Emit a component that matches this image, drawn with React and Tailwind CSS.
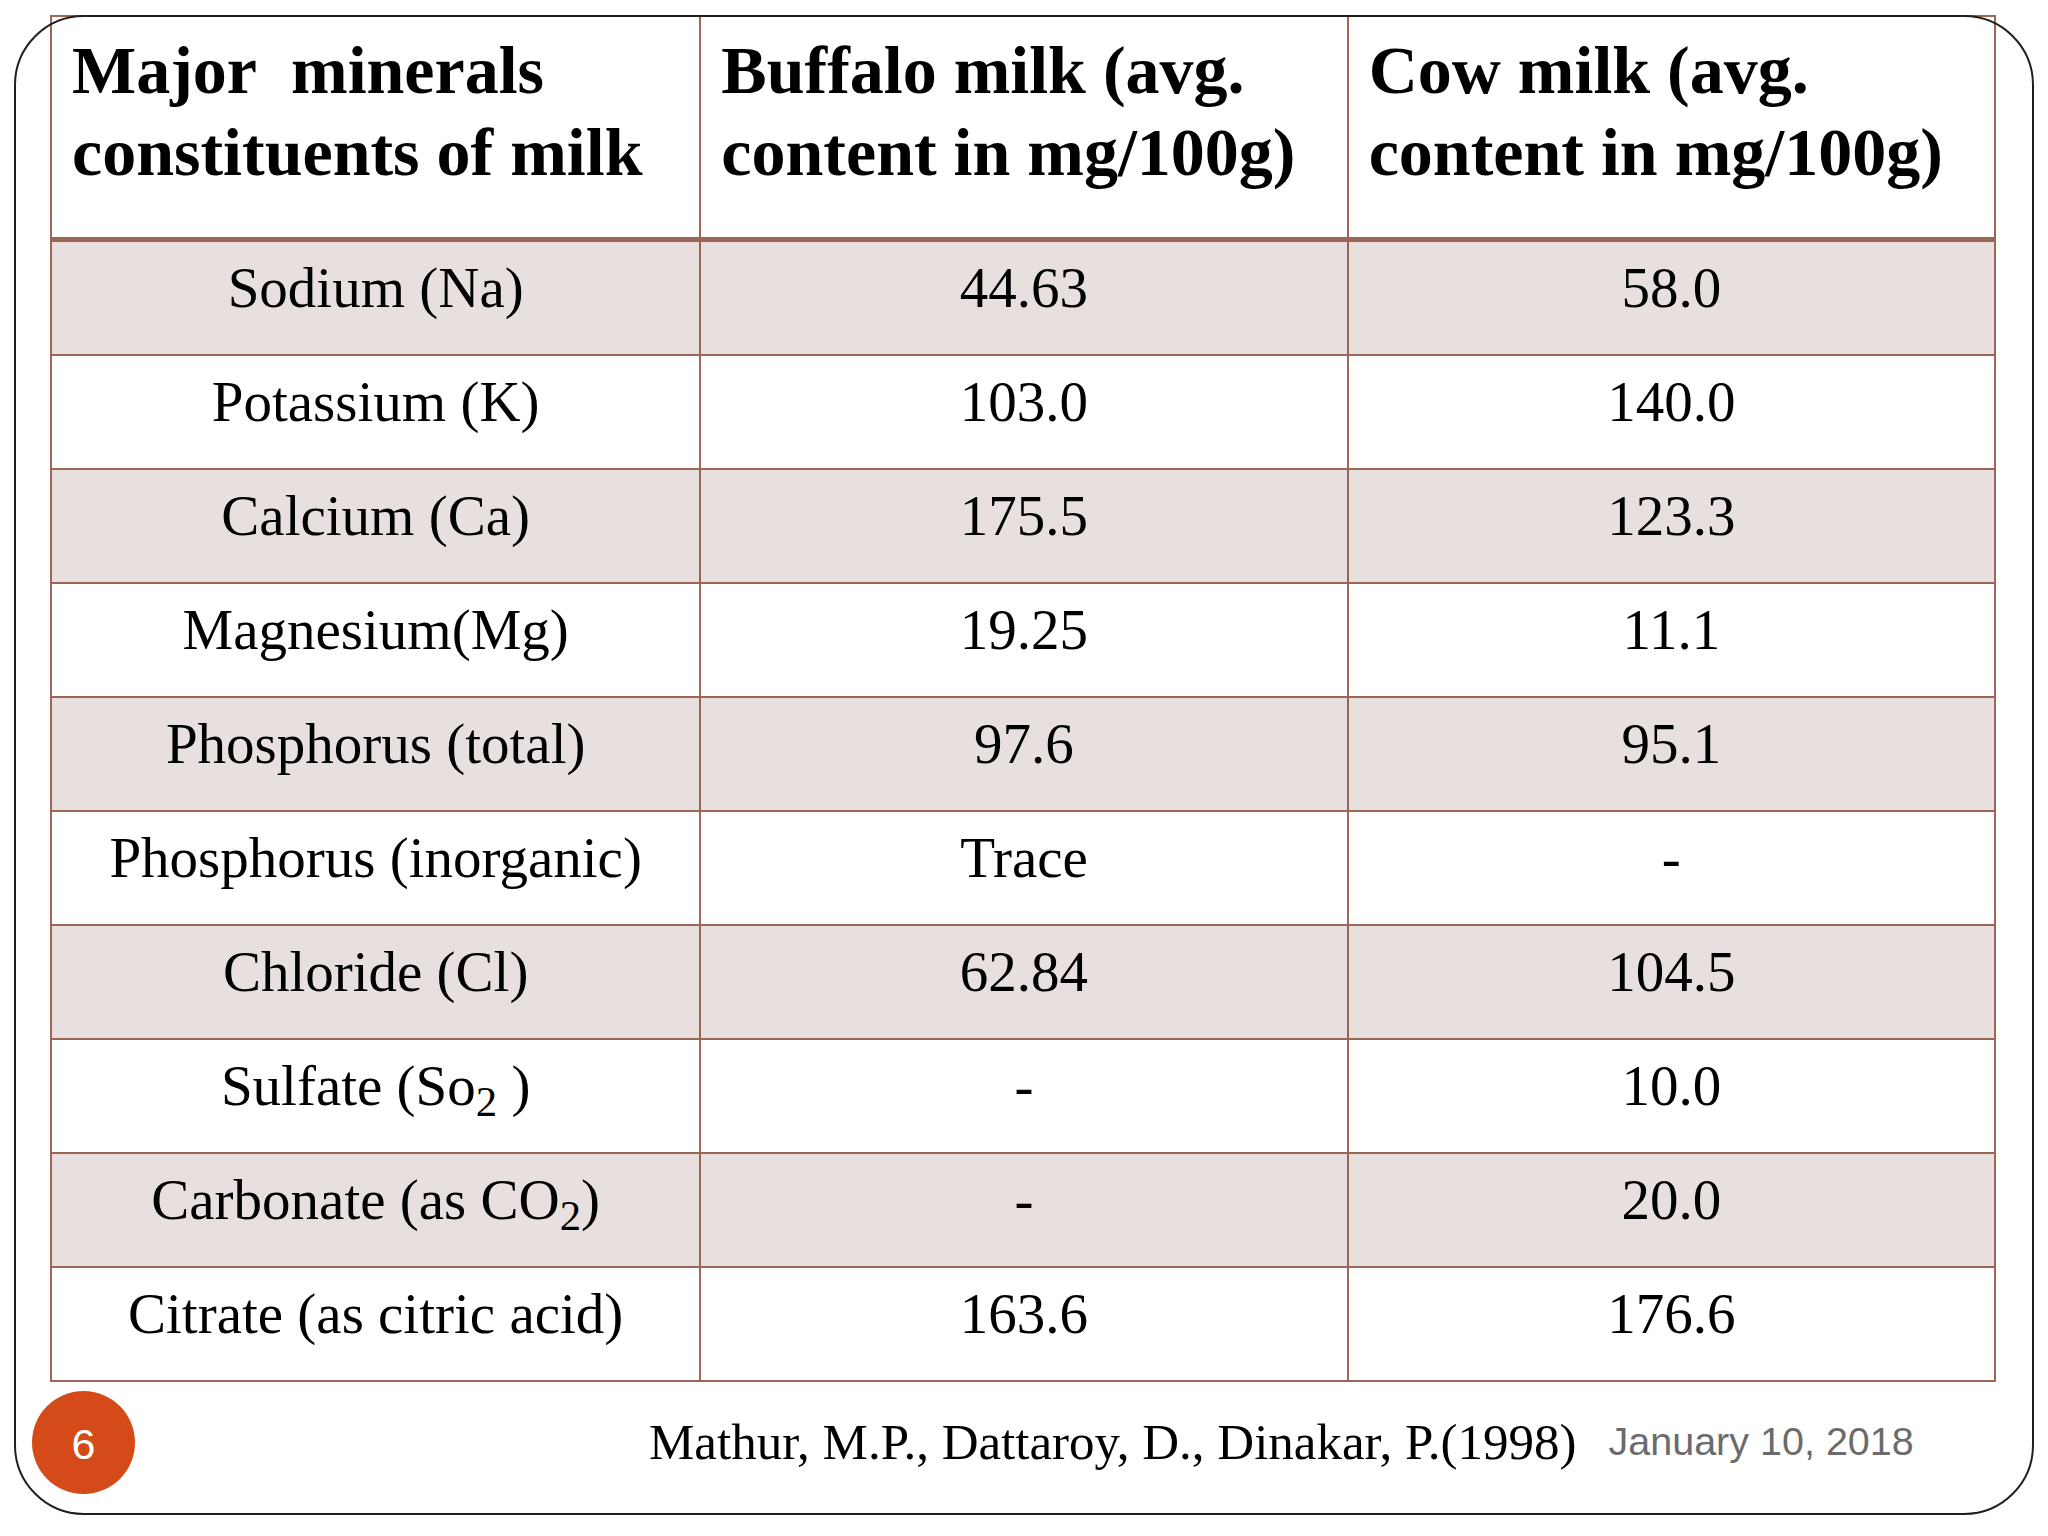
import React from 'react';

const rows = [
	{ name: 'Sodium (Na)', buffalo: '44.63', cow: '58.0' },
	{ name: 'Potassium (K)', buffalo: '103.0', cow: '140.0' },
	{ name: 'Calcium (Ca)', buffalo: '175.5', cow: '123.3' },
	{ name: 'Magnesium(Mg)', buffalo: '19.25', cow: '11.1' },
	{ name: 'Phosphorus (total)', buffalo: '97.6', cow: '95.1' },
	{ name: 'Phosphorus (inorganic)', buffalo: 'Trace', cow: '-' },
	{ name: 'Chloride (Cl)', buffalo: '62.84', cow: '104.5' },
	{
		name: (
			<>
				Sulfate (So<sub>2</sub> )
			</>
		),
		buffalo: '-',
		cow: '10.0',
	},
	{
		name: (
			<>
				Carbonate (as CO<sub>2</sub>)
			</>
		),
		buffalo: '-',
		cow: '20.0',
	},
	{ name: 'Citrate (as citric acid)', buffalo: '163.6', cow: '176.6' },
];

const Row = ({ row, shaded, last }) => {
	const bg = shaded ? 'bg-[#e8e0de]' : 'bg-white';
	const h = last ? 'h-[112px]' : 'h-[114px] border-b-2 border-[#9c6757]';
	return (
		<div className={`grid grid-cols-3 ${h} ${bg}`}>
			<div className="pt-[14px] text-center leading-[64px]">{row.name}</div>
			<div className="pt-[14px] text-center leading-[64px] border-l-2 border-[#9c6757]">
				{row.buffalo}
			</div>
			<div className="pt-[14px] text-center leading-[64px] border-l-2 border-[#9c6757]">
				{row.cow}
			</div>
		</div>
	);
};

const App = () => {
	return (
		<div className="relative w-[2048px] h-[1536px] bg-white overflow-hidden font-['Liberation_Serif',serif] text-black">
			<div className="pl-[50px] pt-[15px]">
				<div className="w-[1946px] border-2 border-[#9c6757] text-[57px]">
					{/* header */}
					<div className="grid grid-cols-3 h-[225px] border-b-[5px] border-[#9c6757] bg-white font-bold text-[68px] leading-[82px]">
						<div className="pt-[12px] pl-[20px]">
							{'Major\u00a0 minerals'}
							<br />
							constituents of milk
						</div>
						<div className="pt-[12px] pl-[20px] border-l-2 border-[#9c6757]">
							Buffalo milk (avg.
							<br />
							content in mg/100g)
						</div>
						<div className="pt-[12px] pl-[20px] border-l-2 border-[#9c6757]">
							Cow milk (avg.
							<br />
							content in mg/100g)
						</div>
					</div>
					{rows.map((row, i) => (
						<Row key={i} row={row} shaded={i % 2 === 0} last={i === rows.length - 1} />
					))}
				</div>
			</div>

			{/* footer */}
			<div className="flex items-start pl-[32px]">
				<div className="mt-[9px] w-[103px] h-[103px] rounded-full bg-[#d44b19] flex items-center justify-center pt-[4px] text-white text-[43px] leading-none font-['Liberation_Sans',sans-serif]">
					6
				</div>
				<div className="ml-[514px] mt-[31px] text-[51px] leading-[58px] whitespace-nowrap">
					Mathur, M.P., Dattaroy, D., Dinakar, P.(1998)
				</div>
				<div className="ml-[32px] mt-[36px] text-[39.5px] leading-[46px] text-[#6b6b6b] whitespace-nowrap font-['Liberation_Sans',sans-serif]">
					January 10, 2018
				</div>
			</div>

			{/* slide frame */}
			<div className="absolute left-[14px] top-[15px] w-[2020px] h-[1500px] border-2 border-[#1f1f1f] rounded-[70px] pointer-events-none" />
		</div>
	);
};

export default App;
